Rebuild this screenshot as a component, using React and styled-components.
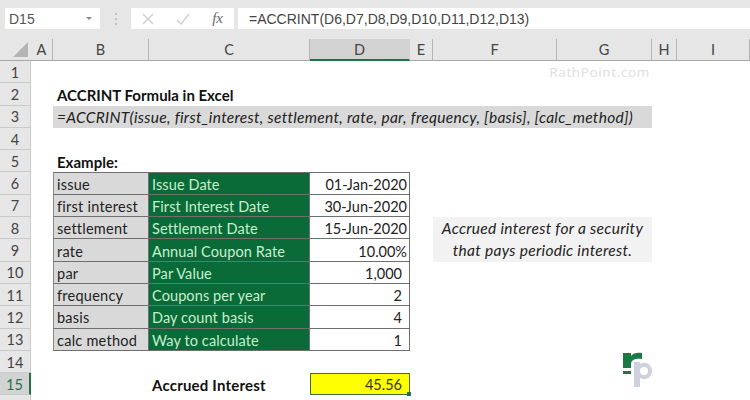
import React from 'react'
import styled, { createGlobalStyle } from 'styled-components'

const GlobalStyle = createGlobalStyle`
  html, body {
    margin: 0;
    padding: 0;
    background: #fff;
  }
  body {
    font-family: "Lato", "Open Sans", sans-serif;
  }
`

const Page = styled.div`
  width: 750px;
  height: 400px;
  overflow: hidden;
  position: relative;
  background: #fff;
`

const FormulaBar = styled.div`
  box-sizing: border-box;
  height: 39px;
  padding: 8px 0 10px 5px;
  display: flex;
  align-items: stretch;
  background: #e6e6e6;
`

const NameBox = styled.div`
  box-sizing: border-box;
  width: 95px;
  padding: 0 8px 0 4px;
  display: flex;
  align-items: center;
  justify-content: space-between;
  background: #fff;
  color: #555;
  font-family: "Liberation Sans", sans-serif;
  font-size: 14px;
`

const Caret = styled.span`
  width: 0;
  height: 0;
  border-left: 3px solid transparent;
  border-right: 3px solid transparent;
  border-top: 3px solid #888;
`

const Grip = styled.div`
  width: 31px;
  display: flex;
  flex-direction: column;
  align-items: center;
  justify-content: center;
  gap: 3px;
`

const GripDot = styled.span`
  width: 2px;
  height: 2px;
  background: #c4c4c4;
`

const ActionBox = styled.div`
  box-sizing: border-box;
  width: 103px;
  padding: 0 11px 0 11px;
  display: flex;
  align-items: center;
  justify-content: space-between;
  background: #fff;
`

const Fx = styled.span`
  color: #666;
  font-family: "Liberation Serif", serif;
  font-style: italic;
  font-size: 15px;
`

const FormulaInput = styled.div`
  flex: 1;
  margin-left: 4px;
  padding-left: 11px;
  display: flex;
  align-items: center;
  background: #fff;
  color: #444;
  font-family: "Liberation Sans", sans-serif;
  font-size: 14px;
`

const Sheet = styled.div`
  display: grid;
  grid-template-columns: 31px 22px 96px 161px 100px 23px 124px 95px 25px 73px;
  grid-template-rows: 22px repeat(16, 22.3px);
`

const Corner = styled.div`
  grid-column: 1;
  grid-row: 1;
  position: relative;
  background: #e6e6e6;
  border-bottom: 1px solid #a8a8a8;
  &::after {
    content: '';
    position: absolute;
    right: 3px;
    bottom: 3px;
    border-left: 15px solid transparent;
    border-bottom: 15px solid #b4b4b4;
  }
`

const ColHead = styled.div`
  box-sizing: border-box;
  grid-row: 1;
  grid-column: ${p => p.$col};
  display: flex;
  align-items: center;
  justify-content: center;
  background: ${p => (p.$active ? '#d2d2d2' : '#e6e6e6')};
  border-right: 1px solid ${p => (p.$active ? '#d2d2d2' : '#b4b4b4')};
  border-bottom: ${p => (p.$active ? '2px solid #217346' : '1px solid #a8a8a8')};
  color: #444;
  font-size: 14.5px;
`

const RowHead = styled.div`
  box-sizing: border-box;
  grid-column: 1;
  grid-row: ${p => p.$row + 1};
  padding-top: 1px;
  display: flex;
  align-items: center;
  justify-content: center;
  background: ${p => (p.$active ? '#d2d2d2' : '#e6e6e6')};
  border-bottom: 1px solid #c9c9c9;
  border-right: ${p => (p.$active ? '2px solid #217346' : '1px solid #c9c9c9')};
  color: ${p => (p.$active ? '#217346' : '#444')};
  font-size: 14.5px;
`

const Title = styled.div`
  grid-column: 3 / 6;
  grid-row: ${p => p.$row + 1};
  padding: 1px 0 0 4px;
  display: flex;
  align-items: center;
  color: #111;
  font-size: 15px;
  font-weight: 700;
`

const Syntax = styled.div`
  grid-column: 3 / 9;
  grid-row: 4;
  padding: 1px 0 0 4px;
  display: flex;
  align-items: center;
  background: #d9d9d9;
  color: #222;
  font-size: 15.5px;
  font-style: italic;
  letter-spacing: 0.3px;
  white-space: nowrap;
`

const Cell = styled.div`
  box-sizing: border-box;
  padding: 2px 3px 0;
  display: flex;
  align-items: center;
  font-size: 14.5px;
  letter-spacing: 0.25px;
  white-space: nowrap;
  border-right: 1px solid #6f6f6f;
  border-bottom: 1px solid #6f6f6f;
  grid-row: ${p => p.$row + 1};
`

const KeyCell = styled(Cell)`
  grid-column: 3;
  border-left: 1px solid #8a8a8a;
  border-top: ${p => (p.$first ? '1px solid #6f6f6f' : '0')};
  background: #d9d9d9;
  color: #222;
`

const LabelCell = styled(Cell)`
  grid-column: 4;
  border-top: ${p => (p.$first ? '1px solid #6f6f6f' : '0')};
  background: #0b6b38;
  color: #c6efce;
  letter-spacing: 0.1px;
`

const ValueCell = styled(Cell)`
  grid-column: 5;
  justify-content: flex-end;
  padding-right: ${p => (p.$accounting ? '7px' : '2px')};
  border-top: ${p => (p.$first ? '1px solid #6f6f6f' : '0')};
  background: #fff;
  color: #222;
  letter-spacing: 0;
`

const ResultLabel = styled.div`
  grid-column: 4;
  grid-row: 16;
  padding: 1px 0 0 3px;
  display: flex;
  align-items: center;
  color: #111;
  font-size: 15px;
  font-weight: 700;
  letter-spacing: 0.2px;
`

const ResultCell = styled.div`
  box-sizing: border-box;
  grid-column: 5;
  grid-row: 16;
  position: relative;
  padding: 1px 7px 0 0;
  display: flex;
  align-items: center;
  justify-content: flex-end;
  background: #ffff00;
  border: 1px solid #3f6b3a;
  color: #333;
  font-size: 14.5px;
  &::after {
    content: '';
    position: absolute;
    right: -2px;
    bottom: -2px;
    width: 4px;
    height: 4px;
    background: #217346;
  }
`

const Note = styled.div`
  grid-column: 7 / 9;
  grid-row: 9 / 11;
  display: flex;
  align-items: center;
  justify-content: center;
  background: #f2f2f2;
  color: #222;
  font-size: 15.5px;
  font-style: italic;
  letter-spacing: 0.3px;
  line-height: 22.3px;
  text-align: center;
`

const Watermark = styled.div`
  grid-column: 7 / 9;
  grid-row: 2;
  padding-right: 2px;
  display: flex;
  align-items: center;
  justify-content: flex-end;
  color: #dedede;
  font-family: "Open Sans", sans-serif;
  font-size: 13.5px;
  letter-spacing: 0.65px;
`

const Logo = styled.svg`
  position: absolute;
  left: 622px;
  top: 351px;
  width: 32px;
  height: 37px;
`

const columns = ['A', 'B', 'C', 'D', 'E', 'F', 'G', 'H', 'I']

const rows = [
  { key: 'issue', label: 'Issue Date', value: '01-Jan-2020' },
  { key: 'first interest', label: 'First Interest Date', value: '30-Jun-2020' },
  { key: 'settlement', label: 'Settlement Date', value: '15-Jun-2020' },
  { key: 'rate', label: 'Annual Coupon Rate', value: '10.00%' },
  { key: 'par', label: 'Par Value', value: '1,000', accounting: true },
  { key: 'frequency', label: 'Coupons per year', value: '2', accounting: true },
  { key: 'basis', label: 'Day count basis', value: '4', accounting: true },
  { key: 'calc method', label: 'Way to calculate', value: '1', accounting: true },
]

export default function App() {
  return (
    <Page>
      <GlobalStyle />
      <FormulaBar>
        <NameBox>
          D15
          <Caret />
        </NameBox>
        <Grip>
          <GripDot />
          <GripDot />
          <GripDot />
        </Grip>
        <ActionBox>
          <svg width="12" height="12" viewBox="0 0 12 12">
            <path d="M1 1l10 10M11 1L1 11" stroke="#cfcfcf" strokeWidth="1.4" fill="none" />
          </svg>
          <svg width="14" height="12" viewBox="0 0 14 12">
            <path d="M1 7l4 4 8-10" stroke="#cfcfcf" strokeWidth="1.4" fill="none" />
          </svg>
          <Fx>fx</Fx>
        </ActionBox>
        <FormulaInput>=ACCRINT(D6,D7,D8,D9,D10,D11,D12,D13)</FormulaInput>
      </FormulaBar>
      <Sheet>
        <Corner />
        {columns.map((c, i) => (
          <ColHead key={c} $col={i + 2} $active={c === 'D'}>{c}</ColHead>
        ))}
        {Array.from({ length: 16 }, (_, i) => i + 1).map(n => (
          <RowHead key={n} $row={n} $active={n === 15}>{n < 16 ? n : ''}</RowHead>
        ))}
        <Watermark>RathPoint.com</Watermark>
        <Title $row={2}>ACCRINT Formula in Excel</Title>
        <Syntax>=ACCRINT(issue, first_interest, settlement, rate, par, frequency, [basis], [calc_method])</Syntax>
        <Title $row={5}>Example:</Title>
        {rows.map((r, i) => (
          <React.Fragment key={r.key}>
            <KeyCell $row={i + 6} $first={i === 0}>{r.key}</KeyCell>
            <LabelCell $row={i + 6} $first={i === 0}>{r.label}</LabelCell>
            <ValueCell $row={i + 6} $first={i === 0} $accounting={r.accounting}>{r.value}</ValueCell>
          </React.Fragment>
        ))}
        <Note>Accrued interest for a security<br />that pays periodic interest.</Note>
        <ResultLabel>Accrued Interest</ResultLabel>
        <ResultCell>45.56</ResultCell>
      </Sheet>
      <Logo viewBox="0 0 32 37">
        <path d="M1 2h8v3c2-3 6-4 11-3v6c-5-1-10 0-11 4v5H1z" fill="#1a7a45" />
        <rect x="1" y="20" width="8" height="3" fill="#1a7a45" />
        <path d="M12 11h6v2c5-3 12 0 12 7s-7 10-12 7v9h-6zM18 20a4 4 0 1 0 8 0a4 4 0 1 0-8 0z" fill="#cdd2dc" fillRule="evenodd" />
      </Logo>
    </Page>
  )
}
